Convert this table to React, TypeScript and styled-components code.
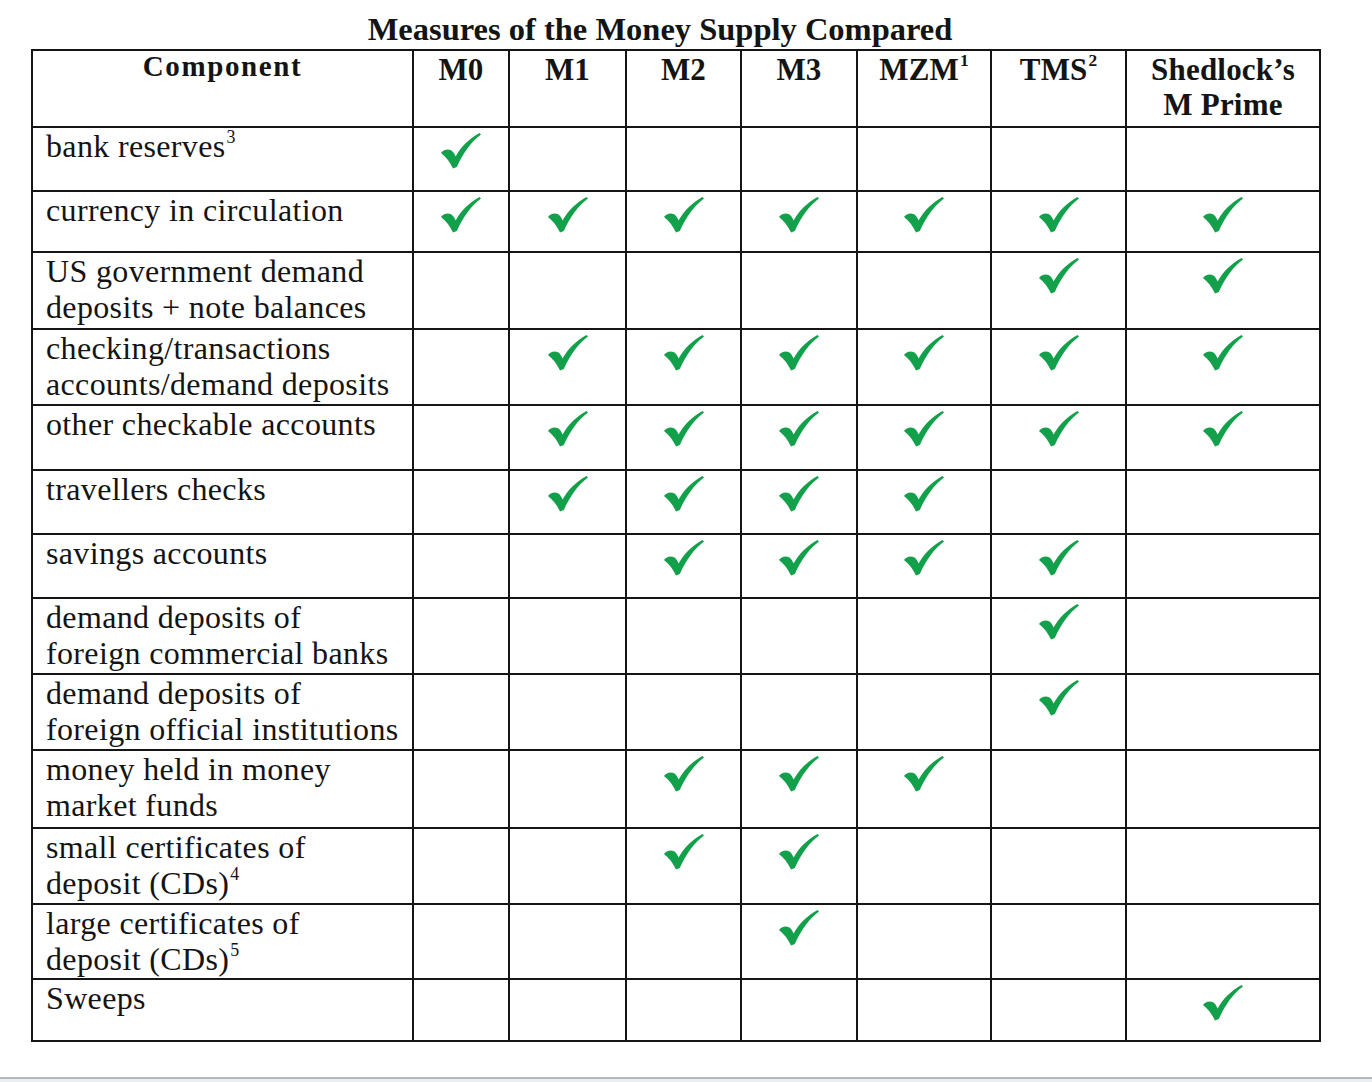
import React from "react";
import styled, { createGlobalStyle } from "styled-components";

const Global = createGlobalStyle`
  html, body { margin: 0; padding: 0; background: #ffffff; }
  body { font-family: "Liberation Serif", "Times New Roman", serif; color: #141414; }
`;

const Page = styled.div`
  height: 1082px;
  display: flex;
  flex-direction: column;
  padding-left: 31px;
  box-sizing: border-box;
  overflow: hidden;
`;

const Title = styled.div`
  width: 1290px;
  box-sizing: border-box;
  padding-top: 11px;
  padding-right: 32px;
  text-align: center;
  font-weight: 700;
  font-size: 32.5px;
  line-height: 36px;
  margin-bottom: 2px;
`;

const Grid = styled.div<{ $rows: number[] }>`
  display: grid;
  width: 1290px;
  box-sizing: border-box;
  grid-template-columns: 381px 96px 117px 115px 116px 134px 135px 194px;
  grid-template-rows: ${(p) => p.$rows.map((r) => `${r}px`).join(" ")};
  border-top: 2px solid #151515;
  border-left: 2px solid #151515;
`;

const Cell = styled.div`
  box-sizing: border-box;
  border-right: 2px solid #151515;
  border-bottom: 2px solid #151515;
  min-width: 0;
`;

const HeadCell = styled(Cell)<{ $first?: boolean }>`
  text-align: center;
  font-weight: 700;
  font-size: ${(p) => (p.$first ? "29px" : "31px")};
  letter-spacing: ${(p) => (p.$first ? "1.6px" : "0.2px")};
  line-height: ${(p) => (p.$first ? "30px" : "35px")};
  padding-top: ${(p) => (p.$first ? "0" : "1px")};
`;

const LabelCell = styled(Cell)`
  font-size: 32px;
  line-height: 36px;
  letter-spacing: 0.35px;
  padding-left: 13px;
  white-space: nowrap;
`;

const MarkCell = styled(Cell)`
  display: flex;
  justify-content: center;
  align-items: flex-start;
  padding-top: 5px;
`;

const Sup = styled.sup`
  font-size: 0.56em;
  line-height: 0;
  vertical-align: 0.78em;
  margin-left: 1px;
  letter-spacing: 0;
`;

const Footer = styled.div`
  margin-top: auto;
  margin-left: -31px;
  width: 1372px;
  height: 5px;
  box-sizing: border-box;
  border-top: 2px solid #b2b6be;
  background: #eceef1;
`;

const Check = () => (
  <svg width="40" height="36" viewBox="0 0 40 36" aria-hidden="true">
    <path
      d="M0,20 C2,16.8 6.5,15.5 10,17.2 C12,18.3 13.4,20.8 14.6,23.6 C20,13.8 28,5.8 38.5,0 L40,1.6 C30,9 22.2,20 15.8,34 L12,35.6 C9,29 5,24 0,20 Z"
      fill="#12a04a"
    />
  </svg>
);

type Row = { label: React.ReactNode; marks: number[] };

const rows: Row[] = [
  { label: <>bank reserves<Sup>3</Sup></>, marks: [1, 0, 0, 0, 0, 0, 0] },
  { label: <>currency in circulation</>, marks: [1, 1, 1, 1, 1, 1, 1] },
  { label: <>US government demand<br />deposits + note balances</>, marks: [0, 0, 0, 0, 0, 1, 1] },
  { label: <>checking/transactions<br />accounts/demand deposits</>, marks: [0, 1, 1, 1, 1, 1, 1] },
  { label: <>other checkable accounts</>, marks: [0, 1, 1, 1, 1, 1, 1] },
  { label: <>travellers checks</>, marks: [0, 1, 1, 1, 1, 0, 0] },
  { label: <>savings accounts</>, marks: [0, 0, 1, 1, 1, 1, 0] },
  { label: <>demand deposits of<br />foreign commercial banks</>, marks: [0, 0, 0, 0, 0, 1, 0] },
  { label: <>demand deposits of<br />foreign official institutions</>, marks: [0, 0, 0, 0, 0, 1, 0] },
  { label: <>money held in money<br />market funds</>, marks: [0, 0, 1, 1, 1, 0, 0] },
  { label: <>small certificates of<br />deposit (CDs)<Sup>4</Sup></>, marks: [0, 0, 1, 1, 0, 0, 0] },
  { label: <>large certificates of<br />deposit (CDs)<Sup>5</Sup></>, marks: [0, 0, 0, 1, 0, 0, 0] },
  { label: <>Sweeps</>, marks: [0, 0, 0, 0, 0, 0, 1] },
];

const heights = [77, 64, 61, 77, 76, 65, 64, 64, 76, 76, 78, 76, 75, 62];

const headers: React.ReactNode[] = [
  <>M0</>,
  <>M1</>,
  <>M2</>,
  <>M3</>,
  <>MZM<Sup>1</Sup></>,
  <>TMS<Sup>2</Sup></>,
  <>Shedlock’s<br />M Prime</>,
];

export default function App() {
  return (
    <>
      <Global />
      <Page>
        <Title>Measures of the Money Supply Compared</Title>
        <Grid $rows={heights} role="table">
          <HeadCell $first role="columnheader">Component</HeadCell>
          {headers.map((h, i) => (
            <HeadCell key={i} role="columnheader">{h}</HeadCell>
          ))}
          {rows.map((r, ri) => (
            <React.Fragment key={ri}>
              <LabelCell role="rowheader">{r.label}</LabelCell>
              {r.marks.map((m, mi) => (
                <MarkCell key={mi} role="cell">{m ? <Check /> : null}</MarkCell>
              ))}
            </React.Fragment>
          ))}
        </Grid>
        <Footer />
      </Page>
    </>
  );
}
